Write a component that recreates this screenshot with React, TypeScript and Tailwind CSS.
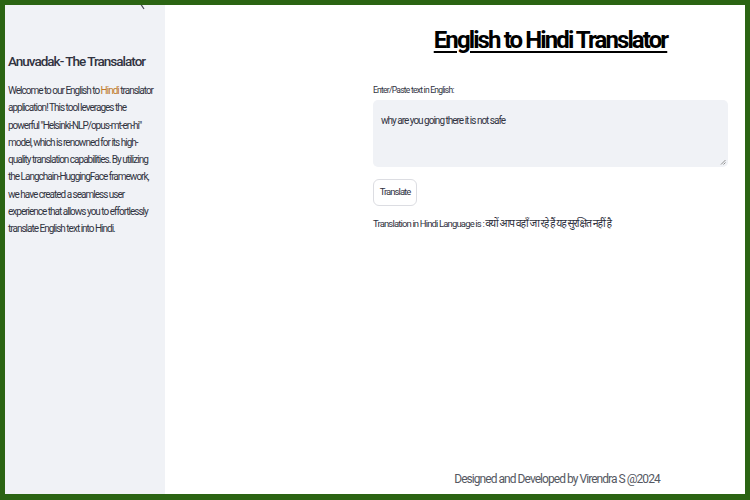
const font = "font-['Roboto','Noto_Sans',sans-serif]";

const sidebarLines = [
  <>Welcome to our English to <span className="text-[#c07a2a]">Hindi</span> translator</>,
  <>application! This tool leverages the</>,
  <>powerful "Helsinki-NLP/opus-mt-en-hi"</>,
  <>model, which is renowned for its high-</>,
  <>quality translation capabilities. By utilizing</>,
  <>the Langchain-HuggingFace framework,</>,
  <>we have created a seamless user</>,
  <>experience that allows you to effortlessly</>,
  <>translate English text into Hindi.</>,
];

const App = () => {
  return (
    <div className={`h-[500px] w-[750px] bg-[#2b6413] pt-[5px] pl-[5px] pr-[5px] pb-[6px] ${font}`}>
      <div className="flex h-full">
        <aside className="relative w-[160px] shrink-0 overflow-hidden bg-[#f0f2f6] px-[3px] text-[#31333f]">
          <svg className="absolute right-[19px] top-[-9px]" width="8" height="14" viewBox="0 0 8 14">
            <path d="M6 1 L2 7 L6 13" fill="none" stroke="#4a4c57" strokeWidth="1.2" />
          </svg>
          <h2 className="mt-[46px] whitespace-nowrap text-[13.5px] font-medium leading-[20px] tracking-[-1px]">
            Anuvadak- The Transalator
          </h2>
          <p className="mt-[11px] text-[10px] leading-[17.3px] tracking-[-1px]">
            {sidebarLines.map((line, i) => (
              <span key={i} className="block whitespace-nowrap">{line}</span>
            ))}
          </p>
        </aside>

        <main className="flex flex-1 flex-col bg-white pl-[208px] pr-[17px] text-[#31333f]">
          <h1 className="mt-[18px] whitespace-nowrap text-center text-[24px] font-bold leading-[34px] tracking-[-1.9px] text-black underline decoration-[2px] underline-offset-[3px]">
            English to Hindi Translator
          </h1>
          <label className="mt-[27px] text-[8.5px] leading-[12px] tracking-[-0.75px]">Enter/Paste text in English:</label>
          <div className="relative mt-[4px] h-[67px] rounded-[5px] bg-[#f0f2f6] px-[8px] pt-[13px] text-[10px] leading-[15px] tracking-[-1px]">
            why are you going there it is not safe
            <svg className="absolute bottom-[2px] right-[2px]" width="6" height="6" viewBox="0 0 6 6">
              <path d="M1 5.5 L5.5 1 M3.5 5.5 L5.5 3.5" stroke="#777" strokeWidth="0.8" />
            </svg>
          </div>
          <button className="mt-[12px] h-[27px] w-[44px] rounded-[6px] border border-[#dcdde2] bg-white text-[9.5px] tracking-[-0.95px] text-[#31333f]">
            Translate
          </button>
          <p className="mt-[11px] whitespace-nowrap text-[9.5px] leading-[14px] tracking-[-0.85px]">
            Translation in Hindi Language is : <span className="text-[10.5px] tracking-[-1px]">क्यों आप वहाँ जा रहे हैं यह सुरक्षित नहीं है</span>
          </p>
          <div className="mt-auto pb-[7px] pl-[13px] text-center text-[12px] leading-[16px] tracking-[-0.95px] text-[#555862]">
            Designed and Developed by Virendra S @2024
          </div>
        </main>
      </div>
    </div>
  );
};

export default App;
